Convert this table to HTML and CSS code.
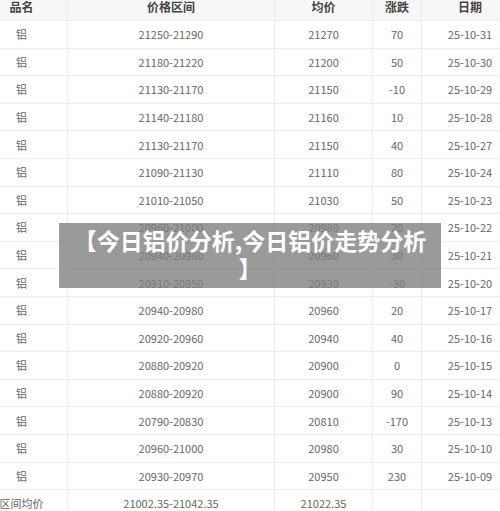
FILE: index.html
```html
<!DOCTYPE html>
<html lang="zh">
<head>
<meta charset="utf-8">
<title>今日铝价分析</title>
<link rel="stylesheet" href="styles.css">
</head>
<body>
<div class="page">
  <table class="price">
    <colgroup>
      <col class="c1"><col class="c2"><col class="c3"><col class="c4"><col class="c5">
    </colgroup>
    <thead>
      <tr><th>品名</th><th>价格区间</th><th>均价</th><th>涨跌</th><th>日期</th></tr>
    </thead>
    <tbody>
      <tr><td>铝</td><td>21250-21290</td><td>21270</td><td>70</td><td>25-10-31</td></tr>
      <tr><td>铝</td><td>21180-21220</td><td>21200</td><td>50</td><td>25-10-30</td></tr>
      <tr><td>铝</td><td>21130-21170</td><td>21150</td><td>-10</td><td>25-10-29</td></tr>
      <tr><td>铝</td><td>21140-21180</td><td>21160</td><td>10</td><td>25-10-28</td></tr>
      <tr><td>铝</td><td>21130-21170</td><td>21150</td><td>40</td><td>25-10-27</td></tr>
      <tr><td>铝</td><td>21090-21130</td><td>21110</td><td>80</td><td>25-10-24</td></tr>
      <tr><td>铝</td><td>21010-21050</td><td>21030</td><td>50</td><td>25-10-23</td></tr>
      <tr><td>铝</td><td>20960-21000</td><td>20980</td><td>20</td><td>25-10-22</td></tr>
      <tr><td>铝</td><td>20940-20980</td><td>20960</td><td>30</td><td>25-10-21</td></tr>
      <tr><td>铝</td><td>20910-20950</td><td>20930</td><td>-30</td><td>25-10-20</td></tr>
      <tr><td>铝</td><td>20940-20980</td><td>20960</td><td>20</td><td>25-10-17</td></tr>
      <tr><td>铝</td><td>20920-20960</td><td>20940</td><td>40</td><td>25-10-16</td></tr>
      <tr><td>铝</td><td>20880-20920</td><td>20900</td><td>0</td><td>25-10-15</td></tr>
      <tr><td>铝</td><td>20880-20920</td><td>20900</td><td>90</td><td>25-10-14</td></tr>
      <tr><td>铝</td><td>20790-20830</td><td>20810</td><td>-170</td><td>25-10-13</td></tr>
      <tr><td>铝</td><td>20960-21000</td><td>20980</td><td>30</td><td>25-10-10</td></tr>
      <tr><td>铝</td><td>20930-20970</td><td>20950</td><td>230</td><td>25-10-09</td></tr>
      <tr><td>区间均价</td><td>21002.35-21042.35</td><td>21022.35</td><td></td><td></td></tr>
    </tbody>
  </table>
  <div class="banner">【今日铝价分析,今日铝价走势分析】</div>
</div>
</body>
</html>
```
FILE: styles.css
```css
html, body {
  margin: 0;
  padding: 0;
  background: #ffffff;
}
body {
  width: 500px;
  height: 511px;
  overflow: hidden;
  position: relative;
  font-family: "Noto Sans CJK SC", "Noto Sans", sans-serif;
}
.page {
  margin: -8px 0 0 -25px;
}
.price {
  border-collapse: collapse;
  table-layout: fixed;
  width: 543px;
}
.c1 { width: 92px; }
.c2 { width: 207px; }
.c3 { width: 98px; }
.c4 { width: 49px; }
.c5 { width: 97px; }
.price th,
.price td {
  border: 1px solid #ececec;
  height: 26.6px;
  padding: 0;
  text-align: center;
  vertical-align: middle;
  white-space: nowrap;
  line-height: 14px;
}
.price th {
  background: #f7f7f7;
  color: #444;
  font-size: 12px;
  font-weight: bold;
  height: 27px;
}
.price td {
  color: #666;
  font-size: 11px;
}
.banner {
  position: absolute;
  left: 59px;
  top: 223px;
  width: 362px;
  height: 62px;
  padding: 3px 10px 0;
  background: rgba(125, 125, 125, 0.78);
  color: #ffffff;
  font-family: "Noto Sans CJK SC", sans-serif;
  font-weight: bold;
  font-size: 23px;
  line-height: 28px;
  text-align: center;
  line-break: anywhere;
}
```
